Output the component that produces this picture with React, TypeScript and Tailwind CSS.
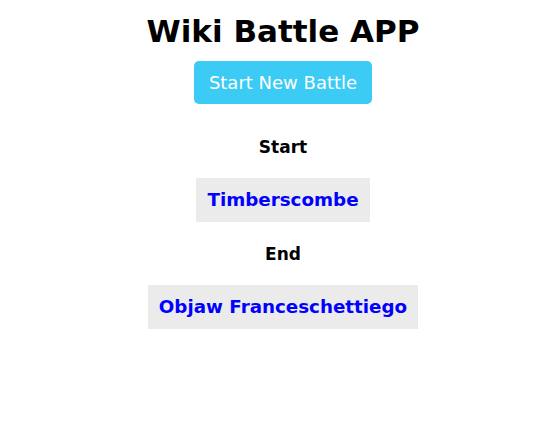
import React from "react";

const font = { fontFamily: '"DejaVu Sans", "Open Sans", sans-serif' };

function Article({ title }: { title: string }) {
  return (
    <div className="flex h-[44px] items-center bg-[#ebebeb] px-[11px]">
      <a href="#" className="text-[18.3px] font-bold leading-none text-[#0000ff]">
        {title}
      </a>
    </div>
  );
}

export default function App() {
  return (
    <div className="flex flex-col items-center bg-white pl-[10px] text-black" style={font}>
      <h1 className="mt-[11px] text-[31px] font-bold leading-[40px]">Wiki Battle APP</h1>
      <button className="mt-[10px] h-[43px] rounded-[5px] bg-[#3bcbf5] px-[15px] text-[18px] text-white">
        Start New Battle
      </button>
      <h3 className="mt-[31px] text-[17px] font-bold leading-[24px]">Start</h3>
      <div className="mt-[19px]">
        <Article title="Timberscombe" />
      </div>
      <h3 className="mt-[20px] text-[17px] font-bold leading-[24px]">End</h3>
      <div className="mt-[19px]">
        <Article title="Objaw Franceschettiego" />
      </div>
    </div>
  );
}
